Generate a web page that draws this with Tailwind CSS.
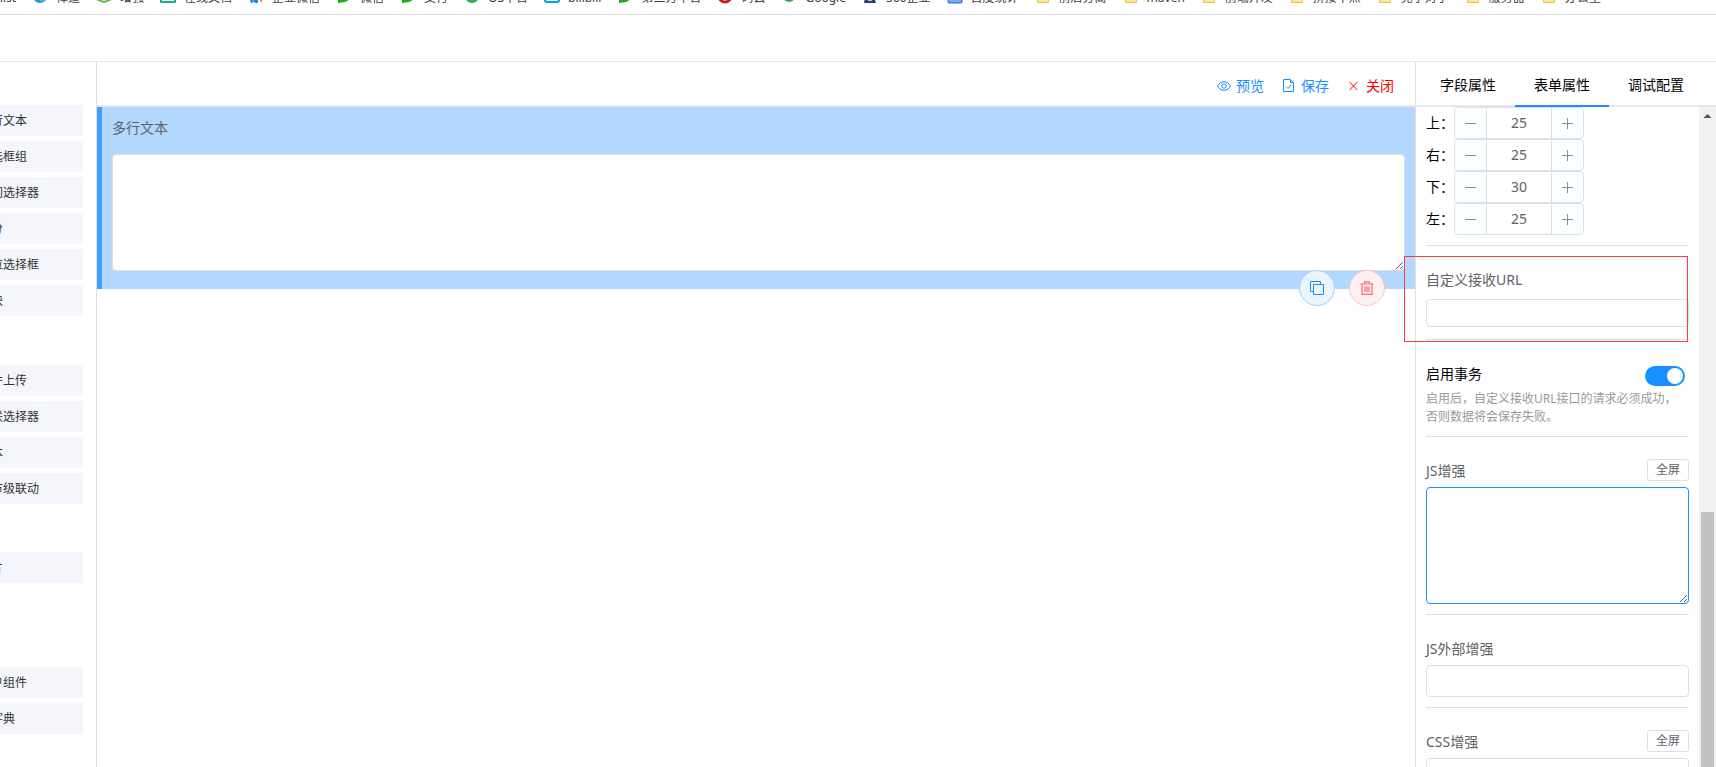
<!DOCTYPE html>
<html lang="zh-CN">
<head>
  <meta charset="UTF-8">
  <title>表单设计器</title>
  <script src="https://cdn.jsdelivr.net/npm/@tailwindcss/browser@4"></script>
</head>
<body class="flex flex-col h-screen overflow-hidden bg-white text-sm text-black font-['Noto_Sans','Noto_Sans_CJK_SC',sans-serif]">
<!-- Bookmarks -->
<nav class="flex items-end gap-4 h-[15px] pb-[6px] shrink-0 overflow-hidden border-b border-[#dadce0] text-xs leading-5 text-[#3c4043] whitespace-nowrap">
  <a href="#" class="flex justify-end w-4">list</a>
  <a href="#" class="flex gap-2"><svg class="size-4" viewBox="0 0 16 16"><circle cx="8" cy="8" r="7" fill="#2d8fd5"/><path d="M8 15a7 7 0 0 0 7-7L8 11z" fill="#35b5d0"/></svg>禅道</a>
  <a href="#" class="flex gap-2"><svg class="size-4" viewBox="0 0 16 16"><path d="M0 10l8 3 8-3v2l-8 3-8-3z" fill="#55b947"/></svg>增强</a>
  <a href="#" class="flex gap-2"><svg class="size-4" viewBox="0 0 16 16"><path d="M1 1h14v13H1z" fill="#fff" stroke="#1db08b" stroke-width="2"/></svg>在线文档</a>
  <a href="#" class="flex gap-2"><svg class="size-4" viewBox="0 0 16 16"><path d="M1 9h2l2 4 3-4h2v6H8l-2-1-3 1z" fill="#1687ee"/><path d="M11 10l4 1-2 4z" fill="#fb7a2c"/></svg>企业微信</a>
  <a href="#" class="flex gap-2"><svg class="size-4" viewBox="0 0 16 16"><path d="M2 15V6a6 6 0 1 1 7 8z" fill="#1aad19"/></svg>微信</a>
  <a href="#" class="flex gap-2"><svg class="size-4" viewBox="0 0 16 16"><path d="M2 15V6a6 6 0 1 1 7 8z" fill="#1aad19"/></svg>支付</a>
  <a href="#" class="flex gap-2"><svg class="size-4" viewBox="0 0 16 16"><circle cx="8" cy="8" r="7" fill="#34a853"/></svg>OS平台</a>
  <a href="#" class="flex gap-2"><svg class="size-4" viewBox="0 0 16 16"><rect x="1" y="1" width="14" height="13" rx="2" fill="#fff" stroke="#00a1d6" stroke-width="2"/></svg>bilibili</a>
  <a href="#" class="flex gap-2"><svg class="size-4" viewBox="0 0 16 16"><path d="M2 15V6a6 6 0 1 1 7 8z" fill="#1aad19"/></svg>第三方平台</a>
  <a href="#" class="flex gap-2"><svg class="size-4" viewBox="0 0 16 16"><circle cx="8" cy="8" r="6" fill="#fff" stroke="#c71d23" stroke-width="3"/></svg>码云</a>
  <a href="#" class="flex gap-2"><svg class="size-4" viewBox="0 0 16 16"><circle cx="8" cy="8" r="6" fill="#34a853"/></svg>Google</a>
  <a href="#" class="flex gap-2"><svg class="size-4" viewBox="0 0 16 16"><path d="M3 9h9l2 6H2z" fill="#1d3f8f"/><path d="M6 10h4v3H6z" fill="#f0d040"/></svg>360企业</a>
  <a href="#" class="flex gap-2"><svg class="size-4" viewBox="0 0 16 16"><rect x="1" y="1" width="14" height="14" rx="1" fill="#7aaaf5" stroke="#2a5bbf"/></svg>百度统计</a>
  <a href="#" class="flex gap-2"><svg class="size-4" viewBox="0 0 16 16"><path d="M2.500 3.500h11v11h-11z" fill="#ffe596" stroke="#e8c44a"/></svg>前后分离</a>
  <a href="#" class="flex gap-2"><svg class="size-4" viewBox="0 0 16 16"><path d="M2.500 3.500h11v11h-11z" fill="#ffe596" stroke="#e8c44a"/></svg>maven</a>
  <a href="#" class="flex gap-2"><svg class="size-4" viewBox="0 0 16 16"><path d="M2.500 3.500h11v11h-11z" fill="#ffe596" stroke="#e8c44a"/></svg>前端开发</a>
  <a href="#" class="flex gap-2"><svg class="size-4" viewBox="0 0 16 16"><path d="M2.500 3.500h11v11h-11z" fill="#ffe596" stroke="#e8c44a"/></svg>拼接不点</a>
  <a href="#" class="flex gap-2"><svg class="size-4" viewBox="0 0 16 16"><path d="M2.500 3.500h11v11h-11z" fill="#ffe596" stroke="#e8c44a"/></svg>竞争对手</a>
  <a href="#" class="flex gap-2"><svg class="size-4" viewBox="0 0 16 16"><path d="M2.500 3.500h11v11h-11z" fill="#ffe596" stroke="#e8c44a"/></svg>服务器</a>
  <a href="#" class="flex gap-2"><svg class="size-4" viewBox="0 0 16 16"><path d="M2.500 3.500h11v11h-11z" fill="#ffe596" stroke="#e8c44a"/></svg>办公室</a>
</nav>

<header class="h-[47px] shrink-0 border-b border-[#e4e7ed]"></header>

<div class="flex flex-1 min-h-0">
  <!-- Field list -->
  <aside class="w-[97px] shrink-0 overflow-hidden border-r border-[#e0e0e0] pt-[43px] pr-[13px] text-xs text-[#333]">
    <ul class="-ml-8 flex flex-col gap-[5px] mb-[49px]">
      <li class="h-[31px] leading-[31px] pl-[11px] bg-[#f4f6fc]">多行文本</li>
      <li class="h-[31px] leading-[31px] pl-[11px] bg-[#f4f6fc]">多选框组</li>
      <li class="h-[31px] leading-[31px] pl-[11px] bg-[#f4f6fc]">时间选择器</li>
      <li class="h-[31px] leading-[31px] pl-[11px] bg-[#f4f6fc]">评分</li>
      <li class="h-[31px] leading-[31px] pl-[11px] bg-[#f4f6fc]">下拉选择框</li>
      <li class="h-[31px] leading-[31px] pl-[11px] bg-[#f4f6fc]">滑块</li>
    </ul>
    <ul class="-ml-8 flex flex-col gap-[5px] mb-12">
      <li class="h-[31px] leading-[31px] pl-[11px] bg-[#f4f6fc]">文件上传</li>
      <li class="h-[31px] leading-[31px] pl-[11px] bg-[#f4f6fc]">级联选择器</li>
      <li class="h-[31px] leading-[31px] pl-[11px] bg-[#f4f6fc]">文本</li>
      <li class="h-[31px] leading-[31px] pl-[11px] bg-[#f4f6fc]">省市级联动</li>
    </ul>
    <ul class="-ml-8 flex flex-col gap-[5px] mb-[84px]">
      <li class="h-[31px] leading-[31px] pl-[11px] bg-[#f4f6fc]">卡片</li>
    </ul>
    <ul class="-ml-8 flex flex-col gap-[5px]">
      <li class="h-[31px] leading-[31px] pl-[11px] bg-[#f4f6fc]">用户组件</li>
      <li class="h-[31px] leading-[31px] pl-[11px] bg-[#f4f6fc]">查字典</li>
    </ul>
  </aside>

  <!-- Canvas -->
  <main class="flex-1 min-w-0">
    <div class="flex justify-end items-center gap-[18px] h-[45px] pt-1 pr-[21px] border-b-2 border-[#e4e7ed]">
      <button class="flex items-center gap-[5px] text-[#1890ff]">
        <svg class="size-[14px]" viewBox="0 0 14 14" fill="none" stroke="currentColor"><path d="M.5 7C2 4.200 4.300 2.700 7 2.700S12 4.200 13.500 7C12 9.800 9.700 11.300 7 11.300S2 9.800.5 7z"/><circle cx="7" cy="7" r="2.200"/></svg>
        预览
      </button>
      <button class="flex items-center gap-[5px] text-[#1890ff]">
        <svg class="size-[14px]" viewBox="0 0 14 14" fill="none" stroke="currentColor"><path d="M1.500.5h7l3 3v9h-10zM8.500.5v3h3M4 7.500l2 2 3-3.500"/></svg>
        保存
      </button>
      <button class="flex items-center gap-[5px] text-[#f00]">
        <svg class="size-[14px]" viewBox="0 0 14 14" fill="none" stroke="currentColor"><path d="M2.500 3l8 8M10.500 3l-8 8"/></svg>
        关闭
      </button>
    </div>
    <div class="relative h-[182px] border-l-[5px] border-[#409eff] bg-[#b3d8ff] px-[10px] pt-[5px]">
      <label for="content" class="block h-[42px] leading-8 text-[#606266]">多行文本</label>
      <textarea id="content" class="block w-full h-[117px] rounded border border-[#dcdfe6] bg-white outline-none"></textarea>
      <div class="absolute right-[30px] -bottom-[17px] flex gap-[14px]">
        <button aria-label="复制" class="flex items-center justify-center size-9 rounded-full border border-[#9ed0ff] bg-[#ecf5ff] text-[#1890ff]">
          <svg class="size-[14px]" viewBox="0 0 14 14" fill="none" stroke="currentColor"><path d="M3.500 3.500h10v10h-10zM3.500 10.500h-3v-10h10v3"/></svg>
        </button>
        <button aria-label="删除" class="flex items-center justify-center size-9 rounded-full border border-[#fbc4c4] bg-[#fef0f0] text-[#f56c6c]">
          <svg class="size-[14px]" viewBox="0 0 14 14" fill="none" stroke="currentColor" stroke-width="1.200"><path d="M.5 3h13M4.500 3V.8h5V3M2 3v10.300h10V3M5 5.500v5.500M7 5.500v5.500M9 5.500v5.500"/></svg>
        </button>
      </div>
    </div>
  </main>

  <!-- Properties -->
  <aside class="flex flex-col w-[301px] shrink-0 border-l border-[#dfe1e6]">
    <div class="flex h-[45px] shrink-0 px-[5px] border-b-2 border-[#e4e7ed]">
      <button class="w-[94px] h-[45px] pt-0.5 border-b-2 border-transparent">字段属性</button>
      <button class="w-[94px] h-[45px] pt-0.5 border-b-2 border-[#1890ff]">表单属性</button>
      <button class="w-[94px] h-[45px] pt-0.5 border-b-2 border-transparent">调试配置</button>
    </div>
    <div class="flex flex-1 min-h-0">
      <div class="flex-1 min-w-0 px-[10px] text-[#606266]">
        <div class="pb-[10px] border-b border-[#dcdfe6]">
          <div class="flex items-center h-8">
            <label for="top" class="w-7 text-black">上：</label>
            <div class="flex w-[130px] h-8 rounded border border-[#dcdfe6] overflow-hidden">
              <button aria-label="减" class="flex items-center justify-center w-8 border-r border-[#dcdfe6] bg-[#f9feff]"><svg class="size-[11px]" viewBox="0 0 11 11" stroke="#8a8e93"><path d="M0 5.500h11"/></svg></button>
              <input id="top" value="25" class="flex-1 min-w-0 text-center outline-none">
              <button aria-label="加" class="flex items-center justify-center w-8 border-l border-[#dcdfe6] bg-[#f9feff]"><svg class="size-[11px]" viewBox="0 0 11 11" stroke="#8a8e93"><path d="M0 5.500h11M5.500 0v11"/></svg></button>
            </div>
          </div>
          <div class="flex items-center h-8">
            <label for="right" class="w-7 text-black">右：</label>
            <div class="flex w-[130px] h-8 rounded border border-[#dcdfe6] overflow-hidden">
              <button aria-label="减" class="flex items-center justify-center w-8 border-r border-[#dcdfe6] bg-[#f9feff]"><svg class="size-[11px]" viewBox="0 0 11 11" stroke="#8a8e93"><path d="M0 5.500h11"/></svg></button>
              <input id="right" value="25" class="flex-1 min-w-0 text-center outline-none">
              <button aria-label="加" class="flex items-center justify-center w-8 border-l border-[#dcdfe6] bg-[#f9feff]"><svg class="size-[11px]" viewBox="0 0 11 11" stroke="#8a8e93"><path d="M0 5.500h11M5.500 0v11"/></svg></button>
            </div>
          </div>
          <div class="flex items-center h-8">
            <label for="bottom" class="w-7 text-black">下：</label>
            <div class="flex w-[130px] h-8 rounded border border-[#dcdfe6] overflow-hidden">
              <button aria-label="减" class="flex items-center justify-center w-8 border-r border-[#dcdfe6] bg-[#f9feff]"><svg class="size-[11px]" viewBox="0 0 11 11" stroke="#8a8e93"><path d="M0 5.500h11"/></svg></button>
              <input id="bottom" value="30" class="flex-1 min-w-0 text-center outline-none">
              <button aria-label="加" class="flex items-center justify-center w-8 border-l border-[#dcdfe6] bg-[#f9feff]"><svg class="size-[11px]" viewBox="0 0 11 11" stroke="#8a8e93"><path d="M0 5.500h11M5.500 0v11"/></svg></button>
            </div>
          </div>
          <div class="flex items-center h-8">
            <label for="left" class="w-7 text-black">左：</label>
            <div class="flex w-[130px] h-8 rounded border border-[#dcdfe6] overflow-hidden">
              <button aria-label="减" class="flex items-center justify-center w-8 border-r border-[#dcdfe6] bg-[#f9feff]"><svg class="size-[11px]" viewBox="0 0 11 11" stroke="#8a8e93"><path d="M0 5.500h11"/></svg></button>
              <input id="left" value="25" class="flex-1 min-w-0 text-center outline-none">
              <button aria-label="加" class="flex items-center justify-center w-8 border-l border-[#dcdfe6] bg-[#f9feff]"><svg class="size-[11px]" viewBox="0 0 11 11" stroke="#8a8e93"><path d="M0 5.500h11M5.500 0v11"/></svg></button>
            </div>
          </div>
        </div>

        <div class="relative pt-5 pb-3 border-b border-[#dcdfe6]">
          <label for="url" class="block h-7 leading-7 mb-[5px]">自定义接收URL</label>
          <input id="url" type="text" class="block w-full h-7 px-2 rounded border border-[#dcdfe6] outline-none">
          <!-- Highlight frame -->
          <div class="absolute -left-[22px] right-px top-[10px] -bottom-[3px] border border-[#f93e3e] pointer-events-none"></div>
        </div>

        <div class="pt-5 pb-[10px] border-b border-[#dcdfe6]">
          <div class="flex justify-between h-7 mb-0.5">
            <label for="transaction" class="leading-7 text-black">启用事务</label>
            <input id="transaction" type="checkbox" checked class="appearance-none flex justify-end items-center w-10 h-5 mt-1.5 mr-1 px-0.5 rounded-full bg-[#c0ccda] checked:bg-[#1890ff] before:size-4 before:rounded-full before:bg-white">
          </div>
          <p class="pr-3 text-xs leading-[18px] text-[#999]">启用后，自定义接收URL接口的请求必须成功，否则数据将会保存失败。</p>
        </div>

        <div class="pt-5 pb-[10px] border-b border-[#dcdfe6]">
          <div class="flex justify-between h-7 mb-0.5">
            <label for="js" class="leading-7">JS增强</label>
            <button class="w-[42px] h-[22px] mt-0.5 rounded-[3px] border border-[#dcdfe6] text-xs">全屏</button>
          </div>
          <textarea id="js" class="block w-full h-[117px] rounded border border-[#1890ff] outline-none"></textarea>
        </div>

        <div class="pt-5 pb-[10px] border-b border-[#dcdfe6]">
          <label for="js-link" class="block h-7 leading-7 mb-0.5">JS外部增强</label>
          <input id="js-link" type="text" class="block w-full h-8 px-2 rounded border border-[#dcdfe6] outline-none">
        </div>

        <div class="pt-5">
          <div class="flex justify-between h-7 mb-0.5">
            <label for="css" class="leading-7">CSS增强</label>
            <button class="w-[42px] h-[22px] mt-0.5 rounded-[3px] border border-[#dcdfe6] text-xs">全屏</button>
          </div>
          <textarea id="css" class="block w-full h-[117px] rounded border border-[#dcdfe6] outline-none"></textarea>
        </div>
      </div>
      <!-- Scrollbar -->
      <div class="flex flex-col w-[17px] shrink-0 px-0.5 bg-[#f1f1f1]">
        <svg class="h-[17px] w-[13px]" viewBox="0 0 13 17"><path d="M2.500 11L6.500 7l4 4z" fill="#505050"/></svg>
        <div class="flex-1 mt-[388px] bg-[#c1c1c1]"></div>
      </div>
    </div>
  </aside>
</div>
</body>
</html>
